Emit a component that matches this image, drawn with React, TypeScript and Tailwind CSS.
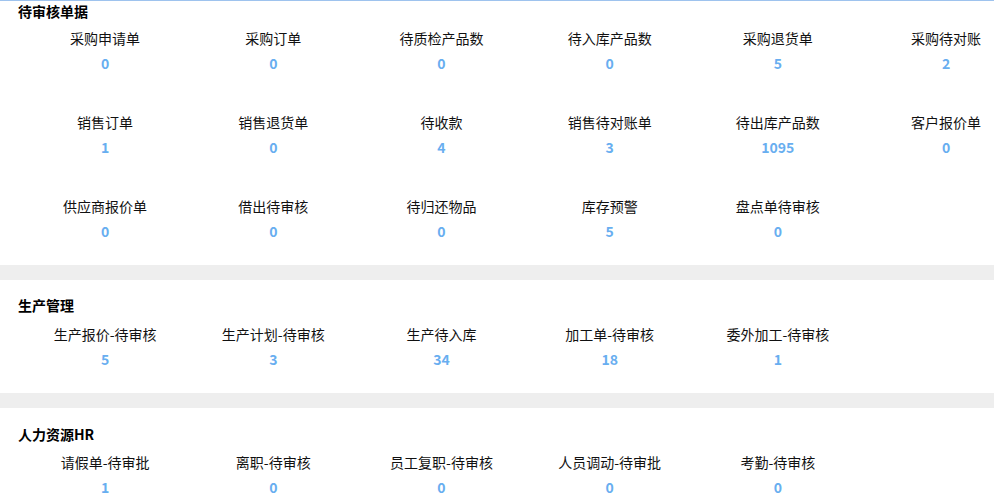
const sections = [
  {
    title: '待审核单据',
    items: [
      { name: '采购申请单', count: 0 },
      { name: '采购订单', count: 0 },
      { name: '待质检产品数', count: 0 },
      { name: '待入库产品数', count: 0 },
      { name: '采购退货单', count: 5 },
      { name: '采购待对账', count: 2 },
      { name: '销售订单', count: 1 },
      { name: '销售退货单', count: 0 },
      { name: '待收款', count: 4 },
      { name: '销售待对账单', count: 3 },
      { name: '待出库产品数', count: 1095 },
      { name: '客户报价单', count: 0 },
      { name: '供应商报价单', count: 0 },
      { name: '借出待审核', count: 0 },
      { name: '待归还物品', count: 0 },
      { name: '库存预警', count: 5 },
      { name: '盘点单待审核', count: 0 },
    ],
  },
  {
    title: '生产管理',
    items: [
      { name: '生产报价-待审核', count: 5 },
      { name: '生产计划-待审核', count: 3 },
      { name: '生产待入库', count: 34 },
      { name: '加工单-待审核', count: 18 },
      { name: '委外加工-待审核', count: 1 },
    ],
  },
  {
    title: '人力资源HR',
    items: [
      { name: '请假单-待审批', count: 1 },
      { name: '离职-待审核', count: 0 },
      { name: '员工复职-待审核', count: 0 },
      { name: '人员调动-待审批', count: 0 },
      { name: '考勤-待审核', count: 0 },
    ],
  },
]

function ItemGrid({ items, labelTop }: { items: { name: string; count: number }[]; labelTop: string }) {
  return (
    <div className="grid grid-cols-[repeat(6,168.2px)] gap-y-[31px] pl-[21px]">
      {items.map((item) => (
        <div key={item.name} className={`flex flex-col items-center ${labelTop}`}>
          <span className="whitespace-nowrap text-[14px] leading-[20px] text-[#111111]">{item.name}</span>
          <span className="mt-[5px] text-[14px] font-bold leading-[20px] text-[#68aef0]">{item.count}</span>
        </div>
      ))}
    </div>
  )
}

export default function App() {
  return (
    <div
      className="h-[499px] w-[994px] overflow-hidden bg-[#eeeeee]"
      style={{ fontFamily: '"Noto Sans CJK SC", "Noto Sans", sans-serif' }}
    >
      {/* 待审核单据 */}
      <div className="border-t border-[#9ec3ee] bg-white pb-[24px]">
        <div className="pl-[18px] pt-[1px] text-[14px] font-bold leading-[18px] text-black">{sections[0].title}</div>
        <ItemGrid items={sections[0].items} labelTop="pt-[8px]" />
      </div>

      {/* 生产管理 */}
      <div className="mt-[15px] bg-white pb-[24px] pt-[16px]">
        <div className="pl-[18px] text-[14px] font-bold leading-[18px] text-black">{sections[1].title}</div>
        <ItemGrid items={sections[1].items} labelTop="pt-[10px]" />
      </div>

      {/* 人力资源HR */}
      <div className="mt-[15px] bg-white pb-[24px] pt-[17px]">
        <div className="pl-[18px] text-[14px] font-bold leading-[18px] text-black">{sections[2].title}</div>
        <ItemGrid items={sections[2].items} labelTop="pt-[9px]" />
      </div>
    </div>
  )
}
